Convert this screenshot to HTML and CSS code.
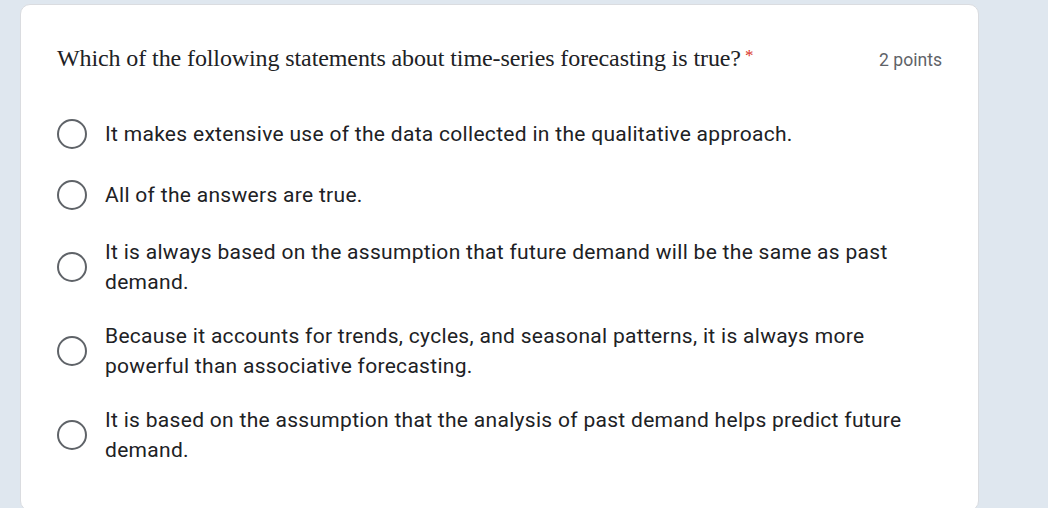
FILE: index.html
```html
<!DOCTYPE html>
<html lang="en">
<head>
<meta charset="utf-8">
<title>Question</title>
<link rel="stylesheet" href="styles.css">
</head>
<body>
<div class="card">
  <div class="header">
    <div class="question">Which of the following statements about time-series forecasting is true?<span class="req">*</span></div>
    <div class="points">2 points</div>
  </div>
  <div class="options">
    <label class="option"><span class="radio"></span><span class="text">It makes extensive use of the data collected in the qualitative approach.</span></label>
    <label class="option"><span class="radio"></span><span class="text">All of the answers are true.</span></label>
    <label class="option"><span class="radio"></span><span class="text">It is always based on the assumption that future demand will be the same as past demand.</span></label>
    <label class="option"><span class="radio"></span><span class="text">Because it accounts for trends, cycles, and seasonal patterns, it is always more powerful than associative forecasting.</span></label>
    <label class="option"><span class="radio"></span><span class="text">It is based on the assumption that the analysis of past demand helps predict future demand.</span></label>
  </div>
</div>
</body>
</html>
```
FILE: styles.css
```css
html, body {
  margin: 0;
  padding: 0;
}
body {
  background: #dfe7ef;
  height: 508px;
  overflow: hidden;
}
.card {
  margin: 4px 0 0 20px;
  width: 959px;
  height: 507px;
  background: #ffffff;
  border: 1px solid #dadce0;
  border-radius: 10px;
  box-sizing: border-box;
  padding: 35px 36px 0 36px;
}
.header {
  display: flex;
  justify-content: space-between;
  align-items: baseline;
}
.question {
  font-family: "Liberation Serif", serif;
  font-size: 24px;
  letter-spacing: -0.1px;
  line-height: 32px;
  color: #202124;
}
.req {
  color: #d93025;
  font-size: 17px;
  margin-left: 4px;
  vertical-align: 5px;
}
.points {
  font-family: Roboto, "Liberation Sans", sans-serif;
  font-size: 17.6px;
  color: #5f6368;
}
.options {
  margin-top: 29px;
  display: flex;
  flex-direction: column;
}
.option {
  display: flex;
  align-items: center;
  gap: 18px;
  padding: 12px 0;
  min-height: 37px;
}
.radio {
  flex: none;
  width: 30px;
  height: 30px;
  box-sizing: border-box;
  border: 2.8px solid #5f6368;
  border-radius: 50%;
}
.text {
  font-family: Roboto, "Liberation Sans", sans-serif;
  font-size: 21px;
  letter-spacing: 0.3px;
  line-height: 30px;
  color: #202124;
}
```
